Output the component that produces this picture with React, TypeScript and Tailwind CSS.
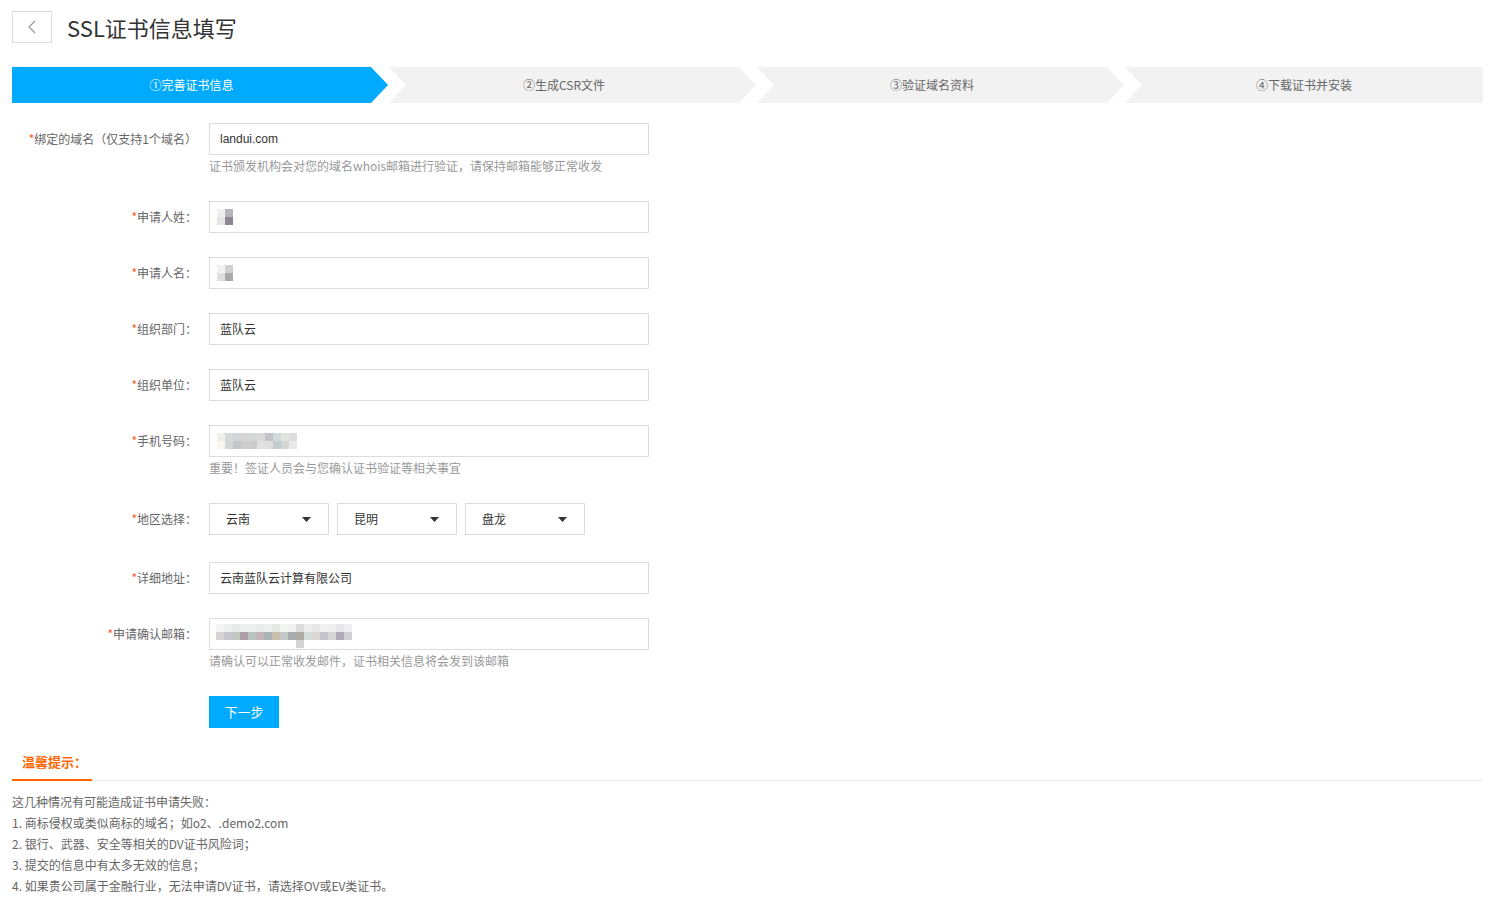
import React from "react";

// 打码像素块
const surname = [
  ["#efefef", "#b7b7bb"],
  ["#e6e6e4", "#8b8591"],
];
const givenName = [
  ["#f1f1f1", "#d0d0d2"],
  ["#dedede", "#a9a9ab"],
];
const phone = [
  ["#f0eeea", "#d6dada", "#d3d6d7", "#d8d4d4", "#d2d8da", "#dcd8d8", "#c5c2cb", "#d3dadb", "#e2e4e0", "#dcdcde"],
  ["#fbf6f0", "#cfd8d6", "#bfc8c7", "#d0cccc", "#c9ccc6", "#e1e1e5", "#e1dfdb", "#c2cbcf", "#d4d7d0", "#e9e9eb"],
];
const email = [
  ["#f4f4f4", "#eeeeee", "#e8eaea", "#eeeeee", "#eef0f0", "#e8ebeb", "#eef0ee", "#e6e8e6", "#f4f4f4", "#f0f0f0", "#dcdcdc", "#eceeee", "#e8e6e6", "#f0f0f0", "#eeeeee", "#e8e8ea", "#eeeeee"],
  ["#d8d4d4", "#c8c6cf", "#c2c8c2", "#ad9ea8", "#b8c4c0", "#c2b6b8", "#a8b4b4", "#c8bfb0", "#c4c8c8", "#a8acb0", "#aeaca4", "#d4dcdc", "#dcd8d4", "#c4c4cc", "#d6d6d6", "#b0aab8", "#cfcfd4"],
  ["", "", "", "", "", "", "", "", "", "", "#d4d4d4", "", "", "", "", "", ""],
];

const Mosaic = ({ rows }: { rows: string[][] }) => (
  <div className="flex flex-col">
    {rows.map((row, i) => (
      <div key={i} className="flex">
        {row.map((c, j) => (
          <span key={j} className="block w-[8px] h-[8px]" style={{ backgroundColor: c || "transparent" }} />
        ))}
      </div>
    ))}
  </div>
);

const Label = ({ text }: { text: string }) => (
  <div className="w-[185px] shrink-0 h-[32px] flex items-center justify-end text-[12px] text-[#666]">
    <span className="text-[#ff5722]">*</span>
    {text}
  </div>
);

const Field = ({
  label,
  children,
  hint,
}: {
  label: string;
  children: React.ReactNode;
  hint?: string;
}) => (
  <div className="flex mb-[24px]">
    <Label text={label} />
    <div className="ml-[12px]">
      {children}
      {hint && <div className="h-[22px] leading-[22px] text-[12px] text-[#999]">{hint}</div>}
    </div>
  </div>
);

const Input = ({ children, top }: { children?: React.ReactNode; top?: boolean }) => (
  <div
    className={`w-[440px] h-[32px] border border-[#dcdcdc] flex text-[12px] text-[#333] ${
      top ? "items-start pt-[5px] pl-[6px]" : "items-center pl-[10px]"
    }`}
  >
    {children}
  </div>
);

const Select = ({ value }: { value: string }) => (
  <div className="w-[120px] h-[32px] border border-[#dcdcdc] flex items-center justify-between pl-[16px] pr-[17px] text-[12px] text-[#333]">
    <span>{value}</span>
    <svg width="9" height="5" viewBox="0 0 9 5">
      <path d="M0 0H9L4.5 5Z" fill="#333" />
    </svg>
  </div>
);

const steps = [
  { text: "①完善证书信息", w: "w-[376px]", clip: "[clip-path:polygon(0_0,359px_0,376px_50%,359px_100%,0_100%)]", active: true },
  { text: "②生成CSR文件", w: "w-[367px]", clip: "[clip-path:polygon(0_0,350px_0,367px_50%,350px_100%,0_100%,17px_50%)]" },
  { text: "③验证域名资料", w: "w-[367px]", clip: "[clip-path:polygon(0_0,350px_0,367px_50%,350px_100%,0_100%,17px_50%)]" },
  { text: "④下载证书并安装", w: "flex-1", clip: "[clip-path:polygon(0_0,100%_0,100%_100%,0_100%,17px_50%)]", last: true },
];

export default function App() {
  return (
    <div
      className="min-h-screen bg-white pl-[12px] pr-[18px] pt-[11px] pb-[20px]"
      style={{ fontFamily: '"Noto Sans CJK SC", "Liberation Sans", sans-serif' }}
    >
      {/* 标题 */}
      <div className="flex items-center h-[32px]">
        <div className="w-[40px] h-[32px] border border-[#dcdcdc] flex items-center justify-center">
          <svg width="8" height="14" viewBox="0 0 8 14">
            <path d="M7 1L1 7L7 13" fill="none" stroke="#999" strokeWidth="1.2" />
          </svg>
        </div>
        <h1 className="ml-[15px] text-[22px] leading-[32px] text-[#333]">SSL证书信息填写</h1>
      </div>

      {/* 步骤条 */}
      <div className="mt-[24px] flex gap-px h-[36px]">
        {steps.map((s) => (
          <div
            key={s.text}
            className={`${s.w} ${s.clip} h-full flex items-center justify-center text-[12px] ${
              s.last ? "" : "pr-[17px]"
            } ${s.active ? "bg-[#00aaff] text-white" : "bg-[#f2f2f2] text-[#666]"}`}
          >
            {s.text}
          </div>
        ))}
      </div>

      {/* 表单 */}
      <div className="mt-[20px]">
        <div className="flex">
          <div className="w-[185px] shrink-0 h-[32px] flex items-center justify-end text-[12px] text-[#666]">
            <span className="text-[#ff5722]">*</span>绑定的域名（仅支持1个域名）
          </div>
          <div className="ml-[12px] mb-[24px]">
            <Input>
              <span style={{ fontFamily: '"Liberation Sans", sans-serif' }}>landui.com</span>
            </Input>
            <div className="h-[22px] leading-[22px] text-[12px] text-[#999]">
              证书颁发机构会对您的域名whois邮箱进行验证，请保持邮箱能够正常收发
            </div>
          </div>
        </div>

        <Field label="申请人姓：">
          <Input>
            <div className="-ml-[3px]">
              <Mosaic rows={surname} />
            </div>
          </Input>
        </Field>
        <Field label="申请人名：">
          <Input>
            <div className="-ml-[3px]">
              <Mosaic rows={givenName} />
            </div>
          </Input>
        </Field>
        <Field label="组织部门：">
          <Input>蓝队云</Input>
        </Field>
        <Field label="组织单位：">
          <Input>蓝队云</Input>
        </Field>
        <Field label="手机号码：" hint="重要！签证人员会与您确认证书验证等相关事宜">
          <Input>
            <div className="-ml-[3px]">
              <Mosaic rows={phone} />
            </div>
          </Input>
        </Field>

        <div className="flex mb-[27px]">
          <Label text="地区选择：" />
          <div className="ml-[12px] flex gap-[8px]">
            <Select value="云南" />
            <Select value="昆明" />
            <Select value="盘龙" />
          </div>
        </div>

        <Field label="详细地址：">
          <Input>云南蓝队云计算有限公司</Input>
        </Field>
        <Field label="申请确认邮箱：" hint="请确认可以正常收发邮件，证书相关信息将会发到该邮箱">
          <Input top>
            <Mosaic rows={email} />
          </Input>
        </Field>

        <div className="ml-[197px]">
          <button className="w-[70px] h-[32px] bg-[#00aaff] text-white text-[13px]">下一步</button>
        </div>
      </div>

      {/* 温馨提示 */}
      <div className="mt-[20px] border-b border-[#e8e8e8]">
        <div className="w-[80px] h-[33px] -mb-px pl-[10px] pt-[4px] flex items-start border-b-2 border-[#ff6600] text-[13px] font-bold text-[#ff6600]">
          温馨提示：
        </div>
      </div>
      <div className="pt-[10px] text-[12px] leading-[21px] text-[#666]">
        <p>这几种情况有可能造成证书申请失败：</p>
        <p>1. 商标侵权或类似商标的域名；如o2、.demo2.com</p>
        <p>2. 银行、武器、安全等相关的DV证书风险词；</p>
        <p>3. 提交的信息中有太多无效的信息；</p>
        <p>4. 如果贵公司属于金融行业，无法申请DV证书，请选择OV或EV类证书。</p>
      </div>
    </div>
  );
}
